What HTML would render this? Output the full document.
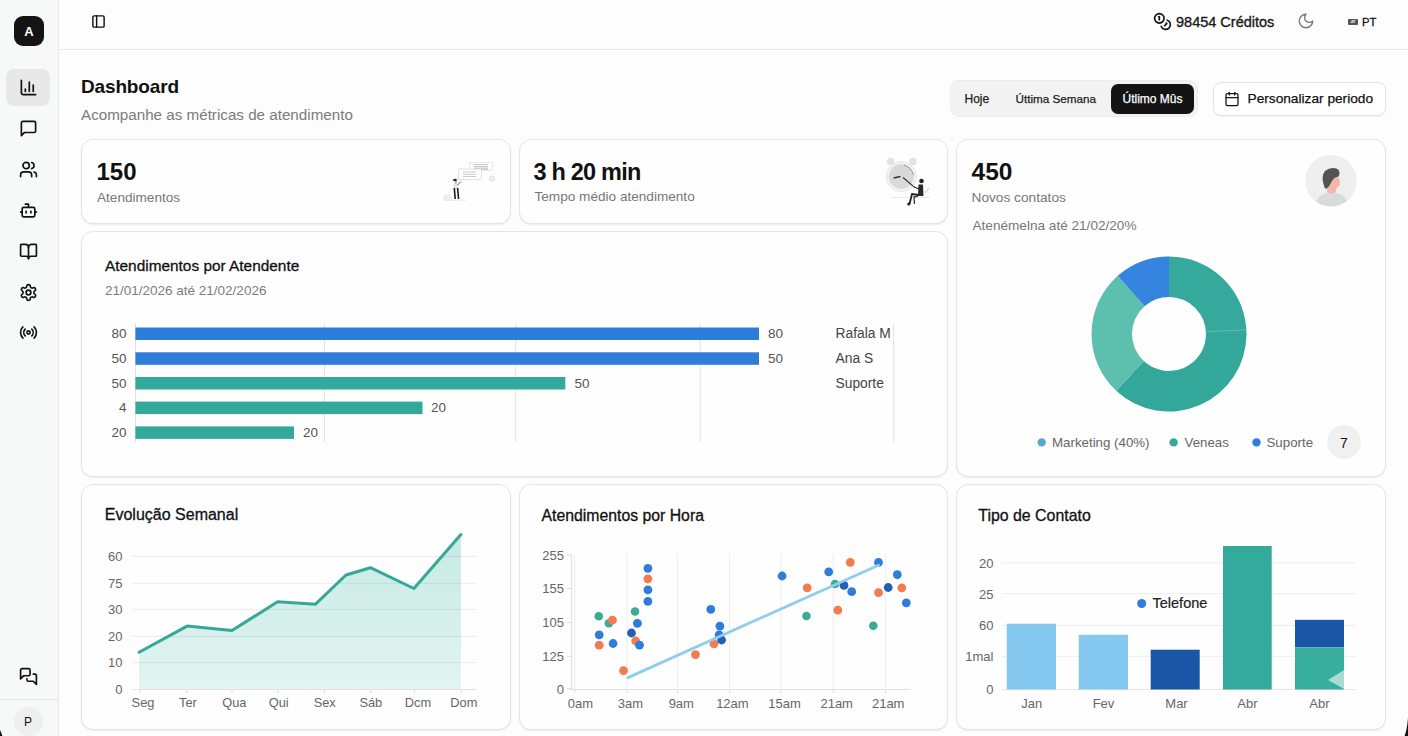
<!DOCTYPE html>
<html><head><meta charset="utf-8"><style>
*{margin:0;padding:0;box-sizing:border-box}
html,body{width:1408px;height:736px;overflow:hidden;background:#fdfdfd;font-family:"Liberation Sans",sans-serif;color:#111}
.abs{position:absolute}
#side{position:absolute;left:0;top:0;width:59px;height:736px;background:#f7f9f9;border-right:1px solid #e8e9e9}
#top{position:absolute;left:59px;top:0;width:1349px;height:50px;border-bottom:1px solid #e9e9e9;background:#fdfdfd}
.card{position:absolute;background:#fefefe;border:1px solid #e4e5e5;border-radius:12px;box-shadow:0 1px 1.5px rgba(0,0,0,0.07)}
.t{position:absolute;white-space:nowrap;line-height:1}
.ico{position:absolute;overflow:visible}
</style></head><body>
<div id="side">
<div class="abs" style="left:14px;top:16px;width:30px;height:30px;background:#141414;border-radius:9px"></div>
<div class="t" style="left:-171.00px;width:400px;text-align:center;top:24.70px;font-size:13px;color:#fff;font-weight:bold;">A</div>
<div class="abs" style="left:6px;top:68.5px;width:44px;height:37px;background:#e8e8e8;border-radius:8px"></div>
<svg class="ico" style="left:19.00px;top:77.50px" width="19" height="19" viewBox="0 0 24 24" fill="none" stroke="#111" stroke-width="2.1" stroke-linecap="round" stroke-linejoin="round"><path d="M3 3v16a2 2 0 0 0 2 2h16"/><path d="M18 17V9"/><path d="M13 17V5"/><path d="M8 17v-3"/></svg>
<svg class="ico" style="left:19.00px;top:118.50px" width="19" height="19" viewBox="0 0 24 24" fill="none" stroke="#111" stroke-width="2.1" stroke-linecap="round" stroke-linejoin="round"><path d="M21 15a2 2 0 0 1-2 2H7l-4 4V5a2 2 0 0 1 2-2h14a2 2 0 0 1 2 2z"/></svg>
<svg class="ico" style="left:19.00px;top:159.50px" width="19" height="19" viewBox="0 0 24 24" fill="none" stroke="#111" stroke-width="2.1" stroke-linecap="round" stroke-linejoin="round"><path d="M16 21v-2a4 4 0 0 0-4-4H6a4 4 0 0 0-4 4v2"/><circle cx="9" cy="7" r="4"/><path d="M22 21v-2a4 4 0 0 0-3-3.87"/><path d="M16 3.13a4 4 0 0 1 0 7.75"/></svg>
<svg class="ico" style="left:19.00px;top:200.50px" width="19" height="19" viewBox="0 0 24 24" fill="none" stroke="#111" stroke-width="2.1" stroke-linecap="round" stroke-linejoin="round"><path d="M12 8V4H8"/><rect width="16" height="12" x="4" y="8" rx="2"/><path d="M2 14h2"/><path d="M20 14h2"/><path d="M15 13v2"/><path d="M9 13v2"/></svg>
<svg class="ico" style="left:19.00px;top:241.50px" width="19" height="19" viewBox="0 0 24 24" fill="none" stroke="#111" stroke-width="2.1" stroke-linecap="round" stroke-linejoin="round"><path d="M12 7v14"/><path d="M3 18a1 1 0 0 1-1-1V4a1 1 0 0 1 1-1h5a4 4 0 0 1 4 4 4 4 0 0 1 4-4h5a1 1 0 0 1 1 1v13a1 1 0 0 1-1 1h-6a3 3 0 0 0-3 3 3 3 0 0 0-3-3z"/></svg>
<svg class="ico" style="left:19.00px;top:282.50px" width="19" height="19" viewBox="0 0 24 24" fill="none" stroke="#111" stroke-width="2.1" stroke-linecap="round" stroke-linejoin="round"><path d="M12.22 2h-.44a2 2 0 0 0-2 2v.18a2 2 0 0 1-1 1.73l-.43.25a2 2 0 0 1-2 0l-.15-.08a2 2 0 0 0-2.73.73l-.22.38a2 2 0 0 0 .73 2.73l.15.1a2 2 0 0 1 1 1.72v.51a2 2 0 0 1-1 1.74l-.15.09a2 2 0 0 0-.73 2.73l.22.38a2 2 0 0 0 2.73.73l.15-.08a2 2 0 0 1 2 0l.43.25a2 2 0 0 1 1 1.73V20a2 2 0 0 0 2 2h.44a2 2 0 0 0 2-2v-.18a2 2 0 0 1 1-1.73l.43-.25a2 2 0 0 1 2 0l.15.08a2 2 0 0 0 2.73-.73l.22-.39a2 2 0 0 0-.73-2.73l-.15-.08a2 2 0 0 1-1-1.74v-.5a2 2 0 0 1 1-1.74l.15-.09a2 2 0 0 0 .73-2.73l-.22-.38a2 2 0 0 0-2.73-.73l-.15.08a2 2 0 0 1-2 0l-.43-.25a2 2 0 0 1-1-1.73V4a2 2 0 0 0-2-2z"/><circle cx="12" cy="12" r="3"/></svg>
<svg class="ico" style="left:19.00px;top:322.50px" width="19" height="19" viewBox="0 0 24 24" fill="none" stroke="#111" stroke-width="2.1" stroke-linecap="round" stroke-linejoin="round"><path d="M4.9 19.1C1 15.2 1 8.8 4.9 4.9"/><path d="M7.8 16.2c-2.3-2.3-2.3-6.1 0-8.5"/><circle cx="12" cy="12" r="2"/><path d="M16.2 7.8c2.3 2.3 2.3 6.1 0 8.5"/><path d="M19.1 4.9C23 8.8 23 15.1 19.1 19"/></svg>
<svg class="ico" style="left:19.00px;top:666.50px" width="19" height="19" viewBox="0 0 24 24" fill="none" stroke="#111" stroke-width="2.1" stroke-linecap="round" stroke-linejoin="round"><path d="M14 9a2 2 0 0 1-2 2H6l-4 4V4a2 2 0 0 1 2-2h8a2 2 0 0 1 2 2z"/><path d="M18 9h2a2 2 0 0 1 2 2v11l-4-4h-6a2 2 0 0 1-2-2v-1"/></svg>
<div class="abs" style="left:0;top:699px;width:58px;height:1px;background:#e6e6e6"></div>
<div class="abs" style="left:13.5px;top:707px;width:29px;height:29px;background:#efefef;border-radius:50%"></div>
<div class="t" style="left:-172.00px;width:400px;text-align:center;top:715.84px;font-size:12px;color:#111;font-weight:normal;">P</div>
</div>
<div id="top"></div>
<svg class="ico" style="left:90.50px;top:13.80px" width="15" height="15" viewBox="0 0 24 24" fill="none" stroke="#111" stroke-width="2.3" stroke-linecap="round" stroke-linejoin="round"><rect width="18" height="18" x="3" y="3" rx="2"/><path d="M9 3v18"/></svg>
<svg class="ico" style="left:1152.50px;top:11.90px" width="19" height="19" viewBox="0 0 24 24" fill="none" stroke="#111" stroke-width="2.1" stroke-linecap="round" stroke-linejoin="round"><circle cx="8" cy="8" r="6"/><path d="M18.09 10.37A6 6 0 1 1 10.34 18"/><path d="M7 6h1v4"/><path d="m16.71 13.88.7.71-2.82 2.82"/></svg>
<div class="t" style="left:1176.00px;top:14.53px;font-size:14.5px;color:#1a1a1a;font-weight:normal;-webkit-text-stroke:0.35px #1a1a1a;">98454 Créditos</div>
<svg class="ico" style="left:1297.00px;top:12.40px" width="18" height="18" viewBox="0 0 24 24" fill="none" stroke="#777" stroke-width="1.8" stroke-linecap="round" stroke-linejoin="round"><path d="M12 3a6 6 0 0 0 9 9 9 9 0 1 1-9-9Z"/></svg>
<div class="abs" style="left:1348px;top:18.5px;width:9.5px;height:6.5px;background:#555;border-radius:1px"></div>
<div class="abs" style="left:1351px;top:20px;width:4px;height:3px;background:#bbb;transform:skewX(-30deg)"></div>
<div class="t" style="left:1362.00px;top:16.52px;font-size:11.2px;color:#111;font-weight:normal;-webkit-text-stroke:0.3px #111;">PT</div>
<div class="t" style="left:81.00px;top:76.92px;font-size:19px;color:#111;font-weight:bold;letter-spacing:-0.15px;">Dashboard</div>
<div class="t" style="left:81.00px;top:106.63px;font-size:15.2px;color:#7b7b7b;font-weight:normal;">Acompanhe as métricas de atendimento</div>
<div class="abs" style="left:950px;top:79.5px;width:248px;height:37.5px;background:#f3f3f3;border:1px solid #ececec;border-radius:9px"></div>
<div class="abs" style="left:1111px;top:83.5px;width:83px;height:30px;background:#141414;border-radius:7px"></div>
<div class="t" style="left:964.50px;top:93.14px;font-size:12px;color:#222;font-weight:normal;-webkit-text-stroke:0.25px #222;">Hoje</div>
<div class="t" style="left:1015.50px;top:93.40px;font-size:11.7px;color:#222;font-weight:normal;-webkit-text-stroke:0.25px #222;">Úttima Semana</div>
<div class="t" style="left:1122.50px;top:93.14px;font-size:12px;color:#fff;font-weight:normal;-webkit-text-stroke:0.25px #fff;">Útlimo Mûs</div>
<div class="abs" style="left:1213px;top:82px;width:173px;height:33.5px;background:#fff;border:1px solid #e3e3e3;border-radius:8px;box-shadow:0 1px 1px rgba(0,0,0,0.05)"></div>
<svg class="ico" style="left:1224.30px;top:90.70px" width="16" height="16" viewBox="0 0 24 24" fill="none" stroke="#111" stroke-width="1.9" stroke-linecap="round" stroke-linejoin="round"><path d="M8 2v4"/><path d="M16 2v4"/><rect width="18" height="18" x="3" y="4" rx="2"/><path d="M3 10h18"/></svg>
<div class="t" style="left:1247.50px;top:92.20px;font-size:13.7px;color:#111;font-weight:normal;-webkit-text-stroke:0.25px #111;">Personalizar periodo</div>
<div class="card" style="left:81px;top:139px;width:430px;height:85px"></div>
<div class="card" style="left:519px;top:139px;width:429px;height:85px"></div>
<div class="card" style="left:956px;top:139px;width:430px;height:338px"></div>
<div class="card" style="left:81px;top:231px;width:867px;height:246px"></div>
<div class="card" style="left:81px;top:484px;width:430px;height:246px"></div>
<div class="card" style="left:519px;top:484px;width:429px;height:246px"></div>
<div class="card" style="left:956px;top:484px;width:430px;height:246px"></div>
<div class="t" style="left:96.50px;top:160.18px;font-size:24px;color:#111;font-weight:bold;">150</div>
<div class="t" style="left:97.00px;top:190.79px;font-size:13.6px;color:#777;font-weight:normal;">Atendimentos</div>
<div class="t" style="left:533.50px;top:161.11px;font-size:23.5px;color:#111;font-weight:bold;letter-spacing:-0.8px;">3 h 20 min</div>
<div class="t" style="left:534.50px;top:190.49px;font-size:13.6px;color:#777;font-weight:normal;">Tempo médio atendimento</div>
<div class="t" style="left:971.50px;top:160.26px;font-size:24.5px;color:#111;font-weight:bold;">450</div>
<div class="t" style="left:971.50px;top:190.90px;font-size:13.7px;color:#777;font-weight:normal;">Novos contatos</div>
<div class="t" style="left:972.50px;top:218.99px;font-size:13.6px;color:#777;font-weight:normal;">Atenémelna até 21/02/20%</div>
<svg class="ico" style="left:436px;top:155px" width="64" height="50" viewBox="436 155 64 50">
<ellipse cx="447.5" cy="197.5" rx="4.5" ry="3.5" fill="#eeeeee"/>
<line x1="444" y1="200.2" x2="466" y2="200.2" stroke="#e2e2e2" stroke-width="0.8"/>
<rect x="469.5" y="162.5" width="23" height="8" fill="#fff" stroke="#dadada" stroke-width="0.6"/>
<line x1="474" y1="164.5" x2="488" y2="164.5" stroke="#aaa" stroke-width="0.7"/>
<line x1="474" y1="166.8" x2="488" y2="166.8" stroke="#999" stroke-width="0.8"/>
<line x1="474" y1="169" x2="488" y2="169" stroke="#888" stroke-width="0.8"/>
<rect x="458.5" y="169" width="23" height="10.5" fill="#fff" stroke="#d5d5d5" stroke-width="0.7"/>
<line x1="463" y1="172" x2="476" y2="172" stroke="#b5b5b5" stroke-width="0.7"/>
<line x1="463" y1="174.3" x2="476" y2="174.3" stroke="#b5b5b5" stroke-width="0.7"/>
<line x1="463" y1="176.5" x2="476" y2="176.5" stroke="#b5b5b5" stroke-width="0.7"/>
<circle cx="492" cy="178.5" r="2.6" fill="#f0f0f0" stroke="#d0d0d0" stroke-width="0.6"/>
<path d="M452.5 180.5 Q454 177.8 456.5 179 Q457.5 180.5 456 181.5 Z" fill="#222"/>
<circle cx="455.8" cy="182.6" r="1.3" fill="#f0a090"/>
<path d="M453.8 184 L458.2 184 L458.5 188.5 L453.5 188.5 Z" fill="#e4e4e4"/>
<path d="M457.5 185 L461 181.5" stroke="#444" stroke-width="0.9"/>
<path d="M454.3 188 L455.2 199" stroke="#1a1a1a" stroke-width="1.6"/>
<path d="M457.6 188 L458.6 199" stroke="#1a1a1a" stroke-width="1.6"/>
</svg>
<svg class="ico" style="left:880px;top:154px" width="50" height="54" viewBox="880 154 50 54">
<circle cx="890.5" cy="161.5" r="3.8" fill="#e3e3e3"/>
<circle cx="913" cy="161.5" r="3.8" fill="#e3e3e3"/>
<circle cx="901.3" cy="176.5" r="15" fill="#f3f3f3" stroke="#e6e6e6" stroke-width="1"/>
<circle cx="901.3" cy="176.5" r="12.5" fill="#d9d9d9"/>
<path d="M893.5 178 L900.5 176.5" stroke="#333" stroke-width="1.3"/>
<path d="M903 177.5 L913 186" stroke="#333" stroke-width="1.1"/>
<path d="M904 165 Q912 168 913.5 175" stroke="#888" stroke-width="0.8" fill="none"/>
<line x1="892" y1="197.5" x2="930" y2="197.5" stroke="#e0e0e0" stroke-width="0.7"/>
<circle cx="921.5" cy="181" r="2.3" fill="#222"/>
<path d="M918.5 184.5 L923 184.5 L923.5 196 L918 196 Z" fill="#2a2a2a"/>
<path d="M913 186.5 L919 189" stroke="#222" stroke-width="1.2"/>
<path d="M919 195 L912 194 L909.5 204" stroke="#222" stroke-width="1.8" fill="none"/>
<path d="M918 196 L914 197 L914.5 204" stroke="#333" stroke-width="1.3" fill="none"/>
<circle cx="908.8" cy="204" r="1.6" fill="#222"/>
<path d="M925 193 L929 188" stroke="#ddd" stroke-width="1.5"/>
</svg>
<svg class="ico" style="left:1304px;top:154px" width="53" height="53" viewBox="1304 154 53 53">
<defs><clipPath id="avc"><circle cx="1331" cy="180.7" r="25.8"/></clipPath></defs>
<circle cx="1331" cy="180.7" r="25.8" fill="#efefef"/>
<g clip-path="url(#avc)">
<path d="M1315.5 210 L1315.8 204 Q1317 194 1331 192 Q1346 193 1347.8 204 L1348 210 Z" fill="#d9dada"/>
<path d="M1327 185 L1336.5 185 L1336 192 Q1331 195 1327 192 Z" fill="#f2b8a8"/>
<ellipse cx="1333.8" cy="182" rx="6.2" ry="7" fill="#f2b8a8"/>
<path d="M1324.5 187.5 Q1320.5 176 1325 171 Q1331 166.5 1337.5 169 Q1341 172 1338.5 176.5 Q1334 177 1332 181 Q1330 186 1326 189 Z" fill="#535353"/>
</g>
</svg>
<svg class="ico" style="left:0;top:0" width="1408" height="736"><path d="M1408 718 Q1407 730 1404.5 736 L1408 736 Z" fill="#111"/><path d="M0 730 Q1.5 733 2.3 736 L0 736 Z" fill="#111"/></svg>
<div class="t" style="left:105.00px;top:257.96px;font-size:15.4px;color:#111;font-weight:normal;-webkit-text-stroke:0.3px #111;">Atendimentos por Atendente</div>
<div class="t" style="left:105.00px;top:283.87px;font-size:13.5px;color:#7d7d7d;font-weight:normal;">21/01/2026 até 21/02/2026</div>
<svg class="ico" style="left:0;top:0" width="1408" height="736"><line x1="135.5" y1="323.5" x2="135.5" y2="442" stroke="#e2e2e2" stroke-width="1"/><line x1="324.5" y1="323.5" x2="324.5" y2="442" stroke="#e2e2e2" stroke-width="1"/><line x1="515.7" y1="323.5" x2="515.7" y2="442" stroke="#e2e2e2" stroke-width="1"/><line x1="700.3" y1="323.5" x2="700.3" y2="442" stroke="#e2e2e2" stroke-width="1"/><line x1="893.7" y1="323.5" x2="893.7" y2="442" stroke="#e2e2e2" stroke-width="1"/><rect x="135.4" y="327.5" width="623.6" height="12.5" fill="#2f7ddb"/><rect x="135.4" y="352.3" width="623.6" height="12.5" fill="#2f7ddb"/><rect x="135.4" y="377" width="429.9" height="12.5" fill="#33a99b"/><rect x="135.4" y="401.6" width="287.1" height="12.5" fill="#33a99b"/><rect x="135.4" y="426.4" width="158.6" height="12.5" fill="#33a99b"/></svg>
<div class="t" style="left:-273.50px;width:400px;text-align:right;top:327.07px;font-size:13.5px;color:#555;font-weight:normal;">80</div>
<div class="t" style="left:-273.50px;width:400px;text-align:right;top:351.87px;font-size:13.5px;color:#555;font-weight:normal;">50</div>
<div class="t" style="left:-273.50px;width:400px;text-align:right;top:376.67px;font-size:13.5px;color:#555;font-weight:normal;">50</div>
<div class="t" style="left:-273.50px;width:400px;text-align:right;top:401.47px;font-size:13.5px;color:#555;font-weight:normal;">4</div>
<div class="t" style="left:-273.50px;width:400px;text-align:right;top:426.17px;font-size:13.5px;color:#555;font-weight:normal;">20</div>
<div class="t" style="left:768.00px;top:327.07px;font-size:13.5px;color:#555;font-weight:normal;">80</div>
<div class="t" style="left:768.00px;top:351.87px;font-size:13.5px;color:#555;font-weight:normal;">50</div>
<div class="t" style="left:574.50px;top:376.67px;font-size:13.5px;color:#555;font-weight:normal;">50</div>
<div class="t" style="left:431.00px;top:401.47px;font-size:13.5px;color:#555;font-weight:normal;">20</div>
<div class="t" style="left:303.00px;top:426.17px;font-size:13.5px;color:#555;font-weight:normal;">20</div>
<div class="t" style="left:835.50px;top:326.82px;font-size:13.8px;color:#444;font-weight:normal;">Rafala M</div>
<div class="t" style="left:835.50px;top:351.72px;font-size:13.8px;color:#444;font-weight:normal;">Ana S</div>
<div class="t" style="left:835.50px;top:376.52px;font-size:13.8px;color:#444;font-weight:normal;">Suporte</div>
<svg class="ico" style="left:0;top:0" width="1408" height="736"><path d="M1169.00 256.50 A77.5 77.5 0 0 1 1246.50 334.68 L1206.00 334.32 A37 37 0 0 0 1169.00 297.00 Z" fill="#35a99b"/><path d="M1246.50 334.00 A77.5 77.5 0 0 1 1116.15 390.68 L1143.77 361.06 A37 37 0 0 0 1206.00 334.00 Z" fill="#33a89a"/><path d="M1116.15 390.68 A77.5 77.5 0 0 1 1117.75 275.87 L1144.53 306.25 A37 37 0 0 0 1143.77 361.06 Z" fill="#5dbfae"/><path d="M1117.75 275.87 A77.5 77.5 0 0 1 1169.00 256.50 L1169.00 297.00 A37 37 0 0 0 1144.53 306.25 Z" fill="#3584e0"/><line x1="1206" y1="331.5" x2="1246" y2="330" stroke="#7cc9bd" stroke-width="0.6"/><circle cx="1041.7" cy="442.4" r="4.2" fill="#58a5cd"/><circle cx="1173.6" cy="442.4" r="4.2" fill="#35a99b"/><circle cx="1256.5" cy="442.4" r="4.2" fill="#2f7ddb"/><circle cx="1344" cy="442" r="17" fill="#f0f0f0"/></svg>
<div class="t" style="left:1052.00px;top:436.04px;font-size:13.3px;color:#666;font-weight:normal;">Marketing (40%)</div>
<div class="t" style="left:1184.50px;top:436.04px;font-size:13.3px;color:#666;font-weight:normal;">Veneas</div>
<div class="t" style="left:1266.50px;top:436.04px;font-size:13.3px;color:#666;font-weight:normal;">Suporte</div>
<div class="t" style="left:1144.00px;width:400px;text-align:center;top:435.65px;font-size:14px;color:#111;font-weight:normal;">7</div>
<div class="t" style="left:104.80px;top:507.46px;font-size:16px;color:#111;font-weight:normal;-webkit-text-stroke:0.3px #111;">Evolução Semanal</div>
<svg class="ico" style="left:0;top:0" width="1408" height="736"><defs><linearGradient id="ag" x1="0" y1="0" x2="0" y2="1"><stop offset="0" stop-color="#c6eae3"/><stop offset="1" stop-color="#e3f4f1"/></linearGradient></defs><path d="M139.1 689.5 L139.1 652.2 L187.1 626.1 L232 630.6 L277.6 601.7 L315.5 604.2 L346 575 L370.4 567.7 L413.9 588.5 L460.9 534.6 L460.9 689.5 Z" fill="url(#ag)"/><line x1="132" y1="556.5" x2="476.5" y2="556.5" stroke="#000" stroke-opacity="0.07" stroke-width="1"/><line x1="132" y1="583.3" x2="476.5" y2="583.3" stroke="#000" stroke-opacity="0.07" stroke-width="1"/><line x1="132" y1="609.4" x2="476.5" y2="609.4" stroke="#000" stroke-opacity="0.07" stroke-width="1"/><line x1="132" y1="636.5" x2="476.5" y2="636.5" stroke="#000" stroke-opacity="0.07" stroke-width="1"/><line x1="132" y1="662.6" x2="476.5" y2="662.6" stroke="#000" stroke-opacity="0.07" stroke-width="1"/><line x1="132" y1="689.5" x2="476.5" y2="689.5" stroke="#e2e2e2" stroke-width="1"/><line x1="139.9" y1="689.5" x2="139.9" y2="693" stroke="#ddd" stroke-width="1"/><line x1="187" y1="689.5" x2="187" y2="693" stroke="#ddd" stroke-width="1"/><line x1="232" y1="689.5" x2="232" y2="693" stroke="#ddd" stroke-width="1"/><line x1="278" y1="689.5" x2="278" y2="693" stroke="#ddd" stroke-width="1"/><line x1="324.5" y1="689.5" x2="324.5" y2="693" stroke="#ddd" stroke-width="1"/><line x1="370.6" y1="689.5" x2="370.6" y2="693" stroke="#ddd" stroke-width="1"/><line x1="414.5" y1="689.5" x2="414.5" y2="693" stroke="#ddd" stroke-width="1"/><line x1="461.3" y1="689.5" x2="461.3" y2="693" stroke="#ddd" stroke-width="1"/><path d="M139.1 652.2 L139.1 652.2 L187.1 626.1 L232 630.6 L277.6 601.7 L315.5 604.2 L346 575 L370.4 567.7 L413.9 588.5 L460.9 534.6" fill="none" stroke="#35a89a" stroke-width="3" stroke-linejoin="round" stroke-linecap="round"/></svg>
<div class="t" style="left:-277.50px;width:400px;text-align:right;top:550.30px;font-size:13px;color:#666;font-weight:normal;">60</div>
<div class="t" style="left:-277.50px;width:400px;text-align:right;top:577.10px;font-size:13px;color:#666;font-weight:normal;">75</div>
<div class="t" style="left:-277.50px;width:400px;text-align:right;top:603.20px;font-size:13px;color:#666;font-weight:normal;">30</div>
<div class="t" style="left:-277.50px;width:400px;text-align:right;top:630.30px;font-size:13px;color:#666;font-weight:normal;">20</div>
<div class="t" style="left:-277.50px;width:400px;text-align:right;top:656.40px;font-size:13px;color:#666;font-weight:normal;">10</div>
<div class="t" style="left:-277.50px;width:400px;text-align:right;top:683.20px;font-size:13px;color:#666;font-weight:normal;">0</div>
<div class="t" style="left:-57.00px;width:400px;text-align:center;top:697.16px;font-size:12.8px;color:#666;font-weight:normal;">Seg</div>
<div class="t" style="left:-12.00px;width:400px;text-align:center;top:697.16px;font-size:12.8px;color:#666;font-weight:normal;">Ter</div>
<div class="t" style="left:34.40px;width:400px;text-align:center;top:697.16px;font-size:12.8px;color:#666;font-weight:normal;">Qua</div>
<div class="t" style="left:78.70px;width:400px;text-align:center;top:697.16px;font-size:12.8px;color:#666;font-weight:normal;">Qui</div>
<div class="t" style="left:124.70px;width:400px;text-align:center;top:697.16px;font-size:12.8px;color:#666;font-weight:normal;">Sex</div>
<div class="t" style="left:170.80px;width:400px;text-align:center;top:697.16px;font-size:12.8px;color:#666;font-weight:normal;">Sáb</div>
<div class="t" style="left:218.00px;width:400px;text-align:center;top:697.16px;font-size:12.8px;color:#666;font-weight:normal;">Dcm</div>
<div class="t" style="left:263.80px;width:400px;text-align:center;top:697.16px;font-size:12.8px;color:#666;font-weight:normal;">Dom</div>
<div class="t" style="left:541.50px;top:507.63px;font-size:15.8px;color:#111;font-weight:normal;-webkit-text-stroke:0.3px #111;">Atendimentos por Hora</div>
<svg class="ico" style="left:0;top:0" width="1408" height="736"><line x1="567" y1="554.8" x2="571.5" y2="554.8" stroke="#ddd" stroke-width="1"/><line x1="567" y1="588.5" x2="571.5" y2="588.5" stroke="#ddd" stroke-width="1"/><line x1="567" y1="622.6" x2="571.5" y2="622.6" stroke="#ddd" stroke-width="1"/><line x1="567" y1="656.3" x2="571.5" y2="656.3" stroke="#ddd" stroke-width="1"/><line x1="567" y1="688.7" x2="571.5" y2="688.7" stroke="#ddd" stroke-width="1"/><line x1="627" y1="553.7" x2="627" y2="689.5" stroke="#ececec" stroke-width="1"/><line x1="677.4" y1="553.7" x2="677.4" y2="689.5" stroke="#ececec" stroke-width="1"/><line x1="729.6" y1="553.7" x2="729.6" y2="689.5" stroke="#ececec" stroke-width="1"/><line x1="781" y1="553.7" x2="781" y2="689.5" stroke="#ececec" stroke-width="1"/><line x1="833.3" y1="553.7" x2="833.3" y2="689.5" stroke="#ececec" stroke-width="1"/><line x1="885.4" y1="553.7" x2="885.4" y2="689.5" stroke="#ececec" stroke-width="1"/><line x1="571.5" y1="553.7" x2="571.5" y2="689.5" stroke="#e0e0e0" stroke-width="1"/><line x1="574.7" y1="553.7" x2="574.7" y2="689.5" stroke="#ececec" stroke-width="1"/><line x1="570" y1="689.5" x2="910.8" y2="689.5" stroke="#e0e0e0" stroke-width="1"/><line x1="574.7" y1="689.5" x2="574.7" y2="693" stroke="#ddd" stroke-width="1"/><line x1="627" y1="689.5" x2="627" y2="693" stroke="#ddd" stroke-width="1"/><line x1="677.4" y1="689.5" x2="677.4" y2="693" stroke="#ddd" stroke-width="1"/><line x1="729.6" y1="689.5" x2="729.6" y2="693" stroke="#ddd" stroke-width="1"/><line x1="781" y1="689.5" x2="781" y2="693" stroke="#ddd" stroke-width="1"/><line x1="833.3" y1="689.5" x2="833.3" y2="693" stroke="#ddd" stroke-width="1"/><line x1="885.4" y1="689.5" x2="885.4" y2="693" stroke="#ddd" stroke-width="1"/><circle cx="598.8" cy="616.3" r="4.3" fill="#3bab96"/><circle cx="608.9" cy="623.3" r="4.3" fill="#3bab96"/><circle cx="635" cy="611.5" r="4.3" fill="#3bab96"/><circle cx="806.5" cy="616" r="4.3" fill="#3bab96"/><circle cx="835" cy="584" r="4.3" fill="#3bab96"/><circle cx="873.3" cy="625.7" r="4.3" fill="#3bab96"/><circle cx="599.2" cy="645.2" r="4.4" fill="#f27b4f"/><circle cx="612.4" cy="620.2" r="4.4" fill="#f27b4f"/><circle cx="623.5" cy="670.6" r="4.4" fill="#f27b4f"/><circle cx="635.7" cy="641" r="4.4" fill="#f27b4f"/><circle cx="647.9" cy="578.8" r="4.4" fill="#f27b4f"/><circle cx="695.5" cy="654.6" r="4.4" fill="#f27b4f"/><circle cx="714" cy="643.8" r="4.4" fill="#f27b4f"/><circle cx="807.2" cy="587.8" r="4.4" fill="#f27b4f"/><circle cx="837.8" cy="610.1" r="4.4" fill="#f27b4f"/><circle cx="850.3" cy="562.4" r="4.4" fill="#f27b4f"/><circle cx="878.5" cy="592.7" r="4.4" fill="#f27b4f"/><circle cx="901.8" cy="587.8" r="4.4" fill="#f27b4f"/><circle cx="599.2" cy="634.8" r="4.4" fill="#2f7ddb"/><circle cx="613.1" cy="643.5" r="4.4" fill="#2f7ddb"/><circle cx="631.5" cy="633" r="4.4" fill="#2260b8"/><circle cx="637.4" cy="623.3" r="4.4" fill="#2f7ddb"/><circle cx="639.5" cy="645.2" r="4.4" fill="#2f7ddb"/><circle cx="647.9" cy="568.3" r="4.4" fill="#2f7ddb"/><circle cx="647.9" cy="589.9" r="4.4" fill="#2f7ddb"/><circle cx="647.9" cy="601.4" r="4.4" fill="#2f7ddb"/><circle cx="710.8" cy="609.4" r="4.4" fill="#2f7ddb"/><circle cx="719.9" cy="626.1" r="4.4" fill="#2f7ddb"/><circle cx="719.2" cy="634.8" r="4.4" fill="#2f7ddb"/><circle cx="721.6" cy="640" r="4.4" fill="#2260b8"/><circle cx="782.1" cy="576" r="4.4" fill="#2f7ddb"/><circle cx="828.7" cy="571.8" r="4.4" fill="#2f7ddb"/><circle cx="844" cy="585.4" r="4.4" fill="#2260b8"/><circle cx="851.7" cy="591.7" r="4.4" fill="#2f7ddb"/><circle cx="878.5" cy="562.4" r="4.4" fill="#2f7ddb"/><circle cx="888.2" cy="587.5" r="4.4" fill="#2260b8"/><circle cx="897.3" cy="574.6" r="4.4" fill="#2f7ddb"/><circle cx="906.3" cy="602.8" r="4.4" fill="#2f7ddb"/><line x1="628" y1="677.6" x2="878.5" y2="565.2" stroke="#8fcdea" stroke-width="2.8" stroke-linecap="round"/></svg>
<div class="t" style="left:164.00px;width:400px;text-align:right;top:548.60px;font-size:13px;color:#666;font-weight:normal;">255</div>
<div class="t" style="left:164.00px;width:400px;text-align:right;top:582.30px;font-size:13px;color:#666;font-weight:normal;">155</div>
<div class="t" style="left:164.00px;width:400px;text-align:right;top:616.40px;font-size:13px;color:#666;font-weight:normal;">105</div>
<div class="t" style="left:164.00px;width:400px;text-align:right;top:650.10px;font-size:13px;color:#666;font-weight:normal;">125</div>
<div class="t" style="left:164.00px;width:400px;text-align:right;top:682.50px;font-size:13px;color:#666;font-weight:normal;">0</div>
<div class="t" style="left:380.40px;width:400px;text-align:center;top:697.00px;font-size:13px;color:#666;font-weight:normal;">0am</div>
<div class="t" style="left:430.50px;width:400px;text-align:center;top:697.00px;font-size:13px;color:#666;font-weight:normal;">3am</div>
<div class="t" style="left:481.30px;width:400px;text-align:center;top:697.00px;font-size:13px;color:#666;font-weight:normal;">9am</div>
<div class="t" style="left:532.40px;width:400px;text-align:center;top:697.00px;font-size:13px;color:#666;font-weight:normal;">12am</div>
<div class="t" style="left:584.60px;width:400px;text-align:center;top:697.00px;font-size:13px;color:#666;font-weight:normal;">15am</div>
<div class="t" style="left:636.70px;width:400px;text-align:center;top:697.00px;font-size:13px;color:#666;font-weight:normal;">21am</div>
<div class="t" style="left:688.20px;width:400px;text-align:center;top:697.00px;font-size:13px;color:#666;font-weight:normal;">21am</div>
<div class="t" style="left:978.30px;top:507.54px;font-size:15.9px;color:#111;font-weight:normal;-webkit-text-stroke:0.3px #111;">Tipo de Contato</div>
<svg class="ico" style="left:0;top:0" width="1408" height="736"><line x1="1002" y1="562.8" x2="1356" y2="562.8" stroke="#ececec" stroke-width="1"/><line x1="1002" y1="593.7" x2="1356" y2="593.7" stroke="#ececec" stroke-width="1"/><line x1="1002" y1="625.4" x2="1356" y2="625.4" stroke="#ececec" stroke-width="1"/><line x1="1002" y1="656.3" x2="1356" y2="656.3" stroke="#ececec" stroke-width="1"/><line x1="1002" y1="689.5" x2="1356" y2="689.5" stroke="#e6e6e6" stroke-width="1"/><rect x="1006.7" y="623.7" width="49.299999999999955" height="65.79999999999995" fill="#86c9f0"/><rect x="1078.7" y="634.8" width="49.299999999999955" height="54.700000000000045" fill="#86c9f0"/><rect x="1150.7" y="649.7" width="49.0" height="39.799999999999955" fill="#1b55a6"/><rect x="1223" y="546" width="48.700000000000045" height="143.5" fill="#33aa9c"/><rect x="1295" y="619.8" width="49" height="27.5" fill="#1b55a6"/><rect x="1295" y="647.3" width="49" height="42.2" fill="#38ae9e"/><path d="M1344 670 L1328 680 L1344 689" fill="#a8dcd2"/><circle cx="1141.7" cy="603.5" r="4.5" fill="#2f7ddb"/></svg>
<div class="t" style="left:593.50px;width:400px;text-align:right;top:556.60px;font-size:13px;color:#666;font-weight:normal;">20</div>
<div class="t" style="left:593.50px;width:400px;text-align:right;top:587.50px;font-size:13px;color:#666;font-weight:normal;">25</div>
<div class="t" style="left:593.50px;width:400px;text-align:right;top:619.20px;font-size:13px;color:#666;font-weight:normal;">60</div>
<div class="t" style="left:593.50px;width:400px;text-align:right;top:650.10px;font-size:13px;color:#666;font-weight:normal;">1mal</div>
<div class="t" style="left:593.50px;width:400px;text-align:right;top:682.50px;font-size:13px;color:#666;font-weight:normal;">0</div>
<div class="t" style="left:831.70px;width:400px;text-align:center;top:697.00px;font-size:13px;color:#666;font-weight:normal;">Jan</div>
<div class="t" style="left:903.50px;width:400px;text-align:center;top:697.00px;font-size:13px;color:#666;font-weight:normal;">Fev</div>
<div class="t" style="left:976.50px;width:400px;text-align:center;top:697.00px;font-size:13px;color:#666;font-weight:normal;">Mar</div>
<div class="t" style="left:1047.40px;width:400px;text-align:center;top:697.00px;font-size:13px;color:#666;font-weight:normal;">Abr</div>
<div class="t" style="left:1119.40px;width:400px;text-align:center;top:697.00px;font-size:13px;color:#666;font-weight:normal;">Abr</div>
<div class="t" style="left:1152.50px;top:596.23px;font-size:14.5px;color:#222;font-weight:normal;-webkit-text-stroke:0.2px #222;">Telefone</div>
</body></html>
